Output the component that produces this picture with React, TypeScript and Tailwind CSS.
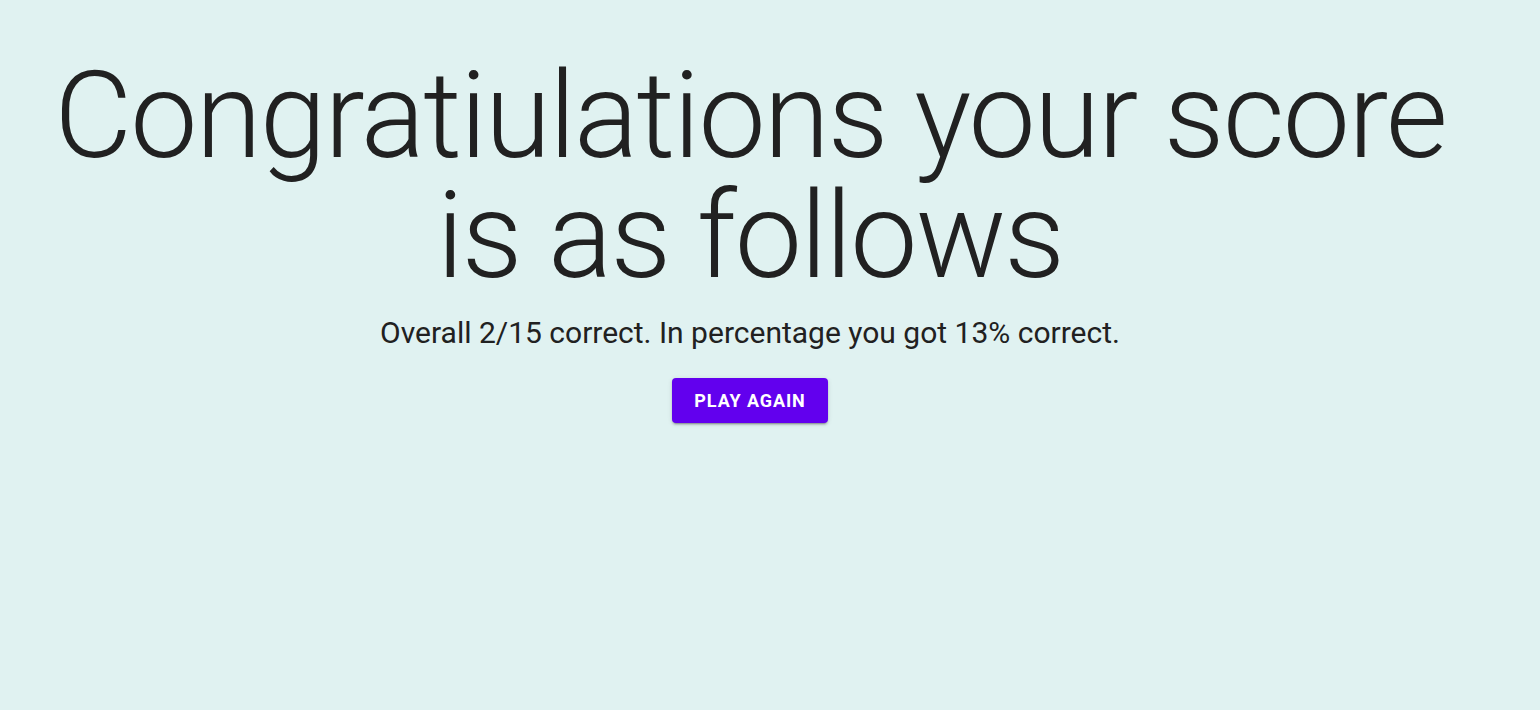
export default function App() {
  return (
    <div
      className="min-h-screen h-[710px] bg-[#e0f2f1] text-[#212121]"
      style={{ fontFamily: "Roboto, 'Liberation Sans', sans-serif" }}
    >
      <div className="w-[1500px] flex flex-col items-center text-center pt-[56px]">
        <h1 className="text-[120px] leading-[120px] font-light tracking-[-0.01562em]">
          Congratiulations your score
          <br />
          is as follows
        </h1>
        <p className="mt-[19px] text-[30px] leading-[36px]">
          Overall 2/15 correct. In percentage you got 13% correct.
        </p>
        <button className="mt-[27px] h-[45px] px-[22px] rounded bg-[#6200ee] text-white text-[18px] font-bold tracking-[0.05em] uppercase shadow-[0_3px_1px_-2px_rgba(0,0,0,0.2),0_2px_2px_0_rgba(0,0,0,0.14),0_1px_5px_0_rgba(0,0,0,0.12)]">
          Play again
        </button>
      </div>
    </div>
  );
}
